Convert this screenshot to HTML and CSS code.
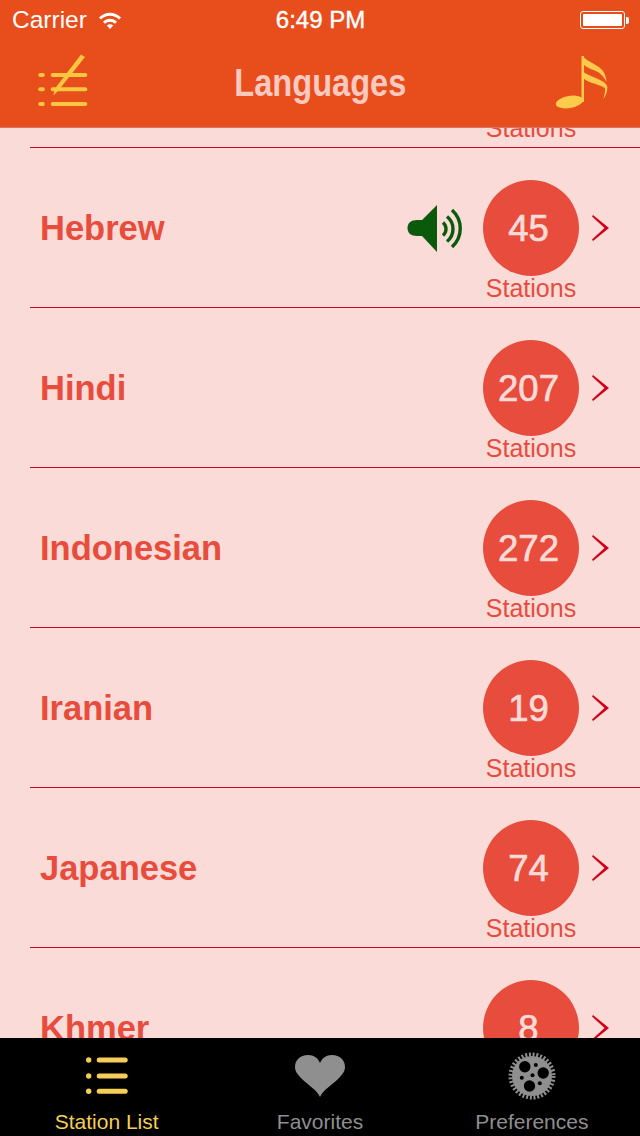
FILE: index.html
```html
<!DOCTYPE html>
<html>
<head>
<title>Languages</title>
<link rel="stylesheet" href="styles.css">
</head>

<body>
  <div class="phone">

    <div class="topbar">
      <div class="status">
        <div class="status-left">
          <span>Carrier</span>
          <svg class="wifi" width="24" height="18" viewBox="0 0 24 18">
            <path d="M1 6.500 C7 0 17 0 23 6.500 L21 8.600 C16 3.600 8 3.600 3 8.600 Z" fill="#fff"/>
            <path d="M5 10.700 C9 6.700 15 6.700 19 10.700 L17 12.800 C14 10 10 10 7 12.800 Z" fill="#fff"/>
            <path d="M8.800 14.600 C10.800 12.800 13.200 12.800 15.200 14.600 L12 18 Z" fill="#fff"/>
          </svg>
        </div>
        <div class="status-time">6:49 PM</div>
        <div class="status-right">
          <div class="battery"><div class="battery-fill"></div></div>
          <div class="battery-nub"></div>
        </div>
      </div>

      <div class="navbar">
        <svg width="58" height="60" viewBox="-6 0 58 60">
          <g fill="#fdc63f">
            <rect x="0.300" y="19" width="6.500" height="4" rx="2"/>
            <rect x="0.300" y="33.300" width="6.500" height="4" rx="2"/>
            <rect x="0.300" y="48" width="6.500" height="4" rx="2"/>
            <rect x="12.700" y="19" width="36.600" height="4" rx="2"/>
            <rect x="12.700" y="33.300" width="36.600" height="4" rx="2"/>
            <rect x="12.700" y="48" width="36.600" height="4" rx="2"/>
          </g>
          <path d="M43 0.500 L47 3 L20 37 L15.300 41.500 L17 34.500 Z" fill="#fdc63f"/>
        </svg>
        <h1>Languages</h1>
        <svg width="58" height="58" viewBox="-6 0 58 58">
          <ellipse cx="13.500" cy="47" rx="13.800" ry="6" transform="rotate(-10 13.500 47)" fill="#fdcb4b"/>
          <path d="M25.500 1 H28 V47 H25.500 Z" fill="#fdcb4b"/>
          <path d="M27.300 1.700 C30 5 37 8 42 11.500 C47 15 50 19 50.500 27 C48 22 45.500 19.500 42 17 C37 14.500 31 13 27.300 9.500 Z" fill="#fdcb4b"/>
          <path d="M27.300 16.700 C31 20 39 22 44 25 C48 27 51 29 51.300 32.300 C51.500 37 49.500 41 47.300 44 C48.500 40 49.500 36 49 33.300 C47 31.500 45 31 42.300 30 C37 28 31 27 27.300 23.300 Z" fill="#fdcb4b"/>
        </svg>
      </div>
    </div>

    <div class="list-wrap">
      <ul class="list">
        <li class="row">
          <div class="name"></div>
          <div class="badge"><div class="count"></div><div class="sub">Stations</div></div>
          <svg class="chev" width="17" height="26" viewBox="0 0 17 26"><path d="M1 0 L17 13 L1 26 L0 24.500 L12.500 13 L0 1.500 Z" fill="#d0021b"/></svg>
        </li>
        <li class="row">
          <div class="name">Hebrew</div>
          <svg class="speaker" width="58" height="48" viewBox="0 0 58 48">
            <path d="M10 16 H15 L30 1 V48 L15 32 H10 C4 32 .5 29 .5 24 C.5 19 4 16 10 16 Z" fill="#0b5a0b"/>
            <g fill="none" stroke="#0b5a0b" stroke-width="3.400">
              <path d="M36 18.500 C40 22 40 28 36 31.500"/>
              <path d="M40 12.500 C48 19 48 31 40 37.500"/>
              <path d="M45 6 C56 16 56 33 45 43"/>
            </g>
          </svg>
          <div class="badge"><div class="count">45</div><div class="sub">Stations</div></div>
          <svg class="chev" width="17" height="26" viewBox="0 0 17 26"><path d="M1 0 L17 13 L1 26 L0 24.500 L12.500 13 L0 1.500 Z" fill="#d0021b"/></svg>
        </li>
        <li class="row">
          <div class="name">Hindi</div>
          <div class="badge"><div class="count">207</div><div class="sub">Stations</div></div>
          <svg class="chev" width="17" height="26" viewBox="0 0 17 26"><path d="M1 0 L17 13 L1 26 L0 24.500 L12.500 13 L0 1.500 Z" fill="#d0021b"/></svg>
        </li>
        <li class="row">
          <div class="name">Indonesian</div>
          <div class="badge"><div class="count">272</div><div class="sub">Stations</div></div>
          <svg class="chev" width="17" height="26" viewBox="0 0 17 26"><path d="M1 0 L17 13 L1 26 L0 24.500 L12.500 13 L0 1.500 Z" fill="#d0021b"/></svg>
        </li>
        <li class="row">
          <div class="name">Iranian</div>
          <div class="badge"><div class="count">19</div><div class="sub">Stations</div></div>
          <svg class="chev" width="17" height="26" viewBox="0 0 17 26"><path d="M1 0 L17 13 L1 26 L0 24.500 L12.500 13 L0 1.500 Z" fill="#d0021b"/></svg>
        </li>
        <li class="row">
          <div class="name">Japanese</div>
          <div class="badge"><div class="count">74</div><div class="sub">Stations</div></div>
          <svg class="chev" width="17" height="26" viewBox="0 0 17 26"><path d="M1 0 L17 13 L1 26 L0 24.500 L12.500 13 L0 1.500 Z" fill="#d0021b"/></svg>
        </li>
        <li class="row">
          <div class="name">Khmer</div>
          <div class="badge"><div class="count">8</div><div class="sub">Stations</div></div>
          <svg class="chev" width="17" height="26" viewBox="0 0 17 26"><path d="M1 0 L17 13 L1 26 L0 24.500 L12.500 13 L0 1.500 Z" fill="#d0021b"/></svg>
        </li>
      </ul>
    </div>

    <div class="tabbar">
      <div class="tab active">
        <div class="tab-icon">
          <svg width="44" height="40" viewBox="0 0 44 40">
            <g fill="#f5cf55">
              <circle cx="3.700" cy="4" r="2.700"/>
              <circle cx="3.700" cy="20" r="2.700"/>
              <circle cx="3.700" cy="35.300" r="2.700"/>
              <rect x="11.700" y="1.500" width="31" height="5" rx="2.500"/>
              <rect x="11.700" y="17.500" width="31" height="5" rx="2.500"/>
              <rect x="11.700" y="32.800" width="31" height="5" rx="2.500"/>
            </g>
          </svg>
        </div>
        <span>Station List</span>
      </div>
      <div class="tab">
        <div class="tab-icon">
          <svg width="50" height="42" viewBox="0 0 50 42">
            <path d="M25 42 C22 35 13 30 7 24 C2 19 0 16 0 12 C0 5 5 0 13 0 C19 0 23 3 25 8 C27 3 31 0 37 0 C45 0 50 5 50 12 C50 16 48 19 43 24 C37 30 28 35 25 42 Z" fill="#8f8f8f"/>
          </svg>
        </div>
        <span>Favorites</span>
      </div>
      <div class="tab last">
        <div class="tab-icon">
          <svg width="48" height="48" viewBox="0 0 48 48">
            <circle cx="24" cy="24" r="20" fill="#8f8f8f"/>
            <circle cx="24" cy="24" r="21.500" fill="none" stroke="#8f8f8f" stroke-width="4" stroke-dasharray="2 1.752"/>
            <g fill="#000">
              <circle cx="16.800" cy="14.700" r="5.700"/>
              <circle cx="35.200" cy="21" r="5.700"/>
              <circle cx="21.500" cy="34" r="5.700"/>
              <circle cx="27.800" cy="13" r="2"/>
              <circle cx="13.800" cy="25.700" r="2"/>
              <circle cx="31.800" cy="31.300" r="2"/>
              <circle cx="24.500" cy="23.300" r="2"/>
            </g>
          </svg>
        </div>
        <span>Preferences</span>
      </div>
    </div>

  </div>
</body>
</html>
```

FILE: styles.css
```css
/* page */
* {
  box-sizing: border-box;
}

body {
  margin: 0;
  background: #fadbd8;
  font-family: "Liberation Sans", Arial, sans-serif;
}

.phone {
  width: 640px;
  height: 1136px;
  display: flex;
  flex-direction: column;
  overflow: hidden;
}

/* top bar */
.topbar {
  height: 128px;
  flex: none;
  background: #e84e1c;
  border-bottom: 1px solid #d4776a;
}

.status {
  height: 40px;
  padding: 0 11px 0 12px;
  display: flex;
  align-items: center;
  color: #fff;
  font-size: 24.500px;
}

.status-left {
  flex: 1;
  display: flex;
  align-items: center;
  gap: 11px;
}

.wifi {
  margin-top: -1px;
}

.status-time {
  font-size: 24px;
  -webkit-text-stroke: 0.4px #fff;
}

.status-right {
  flex: 1;
  display: flex;
  align-items: center;
  justify-content: flex-end;
}

.battery {
  width: 45px;
  height: 18px;
  padding: 2px;
  border: 1px solid #fff;
  border-radius: 3px;
}

.battery-fill {
  height: 100%;
  background: #fff;
  border-radius: 1px;
}

.battery-nub {
  width: 3px;
  height: 7px;
  background: #fff;
  border-radius: 0 2px 2px 0;
  margin-left: 1px;
}

.navbar {
  height: 87px;
  padding: 0 32px;
  display: flex;
  align-items: center;
  justify-content: space-between;
}

.navbar h1 {
  margin: 0;
  color: #fcc9c0;
  font-size: 38px;
  font-weight: bold;
  transform: scaleX(0.857); /* no condensed face installed */
}

/* list */
.list-wrap {
  flex: 1;
  min-height: 0;
  overflow: hidden;
}

.list {
  list-style: none;
  margin: -140px 0 0 30px;
  padding: 0;
}

.row {
  height: 160px;
  padding: 0 31px 0 10px;
  display: flex;
  align-items: center;
  border-bottom: 1px solid #c4101c;
}

.name {
  flex: 1;
  padding-top: 2px;
  color: #e74c3c;
  font-size: 34.500px;
  font-weight: bold;
}

.speaker {
  margin-right: 18px;
}

.badge {
  width: 96px;
  align-self: flex-start;
  padding-top: 32px;
  display: flex;
  flex-direction: column;
  align-items: center;
}

.count {
  width: 96px;
  height: 96px;
  padding-right: 5px;
  border-radius: 50%;
  background: #e74c3c;
  color: #fadbd8;
  font-size: 36.500px;
  line-height: 98px;
  text-align: center;
  -webkit-text-stroke: 0.7px #fadbd8;
}

.sub {
  color: #e74c3c;
  font-size: 25px;
  line-height: 24px;
  white-space: nowrap;
}

.chev {
  margin-left: 13px;
}

/* tab bar */
.tabbar {
  height: 98px;
  flex: none;
  padding-top: 14px;
  background: #000;
  display: grid;
  grid-template-columns: repeat(3, 1fr);
}

.tab {
  display: flex;
  flex-direction: column;
  align-items: center;
  gap: 9px;
  color: #8f8f8f;
  font-size: 21px;
}

.tab.last {
  padding-right: 3px;
}

.tab-icon {
  height: 48px;
  display: flex;
  align-items: center;
}

.tab span {
  line-height: 26px;
}

.tab.active {
  color: #f5cf55;
}
```
